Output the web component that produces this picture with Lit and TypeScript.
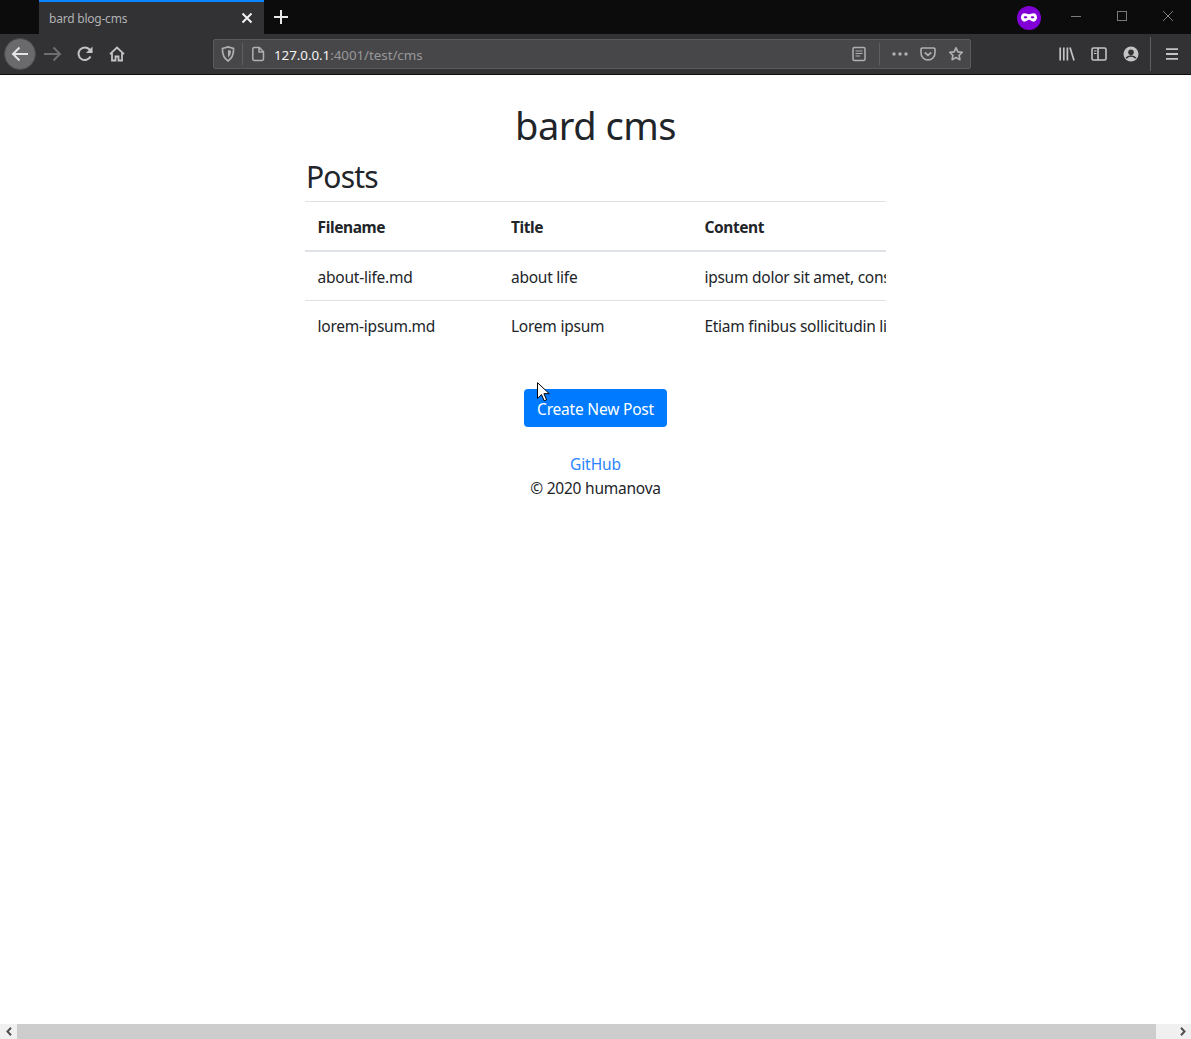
import { LitElement, html, css, svg } from 'lit';
import { customElement } from 'lit/decorators.js';

const posts = [
  { file: 'about-life.md', title: 'about life', content: 'ipsum dolor sit amet, consectetur adipiscing elit' },
  { file: 'lorem-ipsum.md', title: 'Lorem ipsum', content: 'Etiam finibus sollicitudin ligula, vitae tempor' },
];

const icon = (w: number, h: number, body: unknown, cls = '') =>
  html`<svg class=${cls} width=${w} height=${h} viewBox="0 0 ${w} ${h}" fill="none" stroke="currentColor" stroke-width="1.6">${body}</svg>`;

@customElement('app-root')
export class AppRoot extends LitElement {
  static override styles = css`
    :host {
      display: flex;
      flex-direction: column;
      height: 1039px;
      overflow: hidden;
      position: relative;
      background: #fff;
      font-family: 'Noto Sans', 'Open Sans', sans-serif;
      color: #212529;
    }

    svg { display: block; flex-shrink: 0; }

    /* tab strip */
    .tabs {
      height: 34px;
      display: flex;
      background: #0c0c0d;
      padding-left: 39px;
      flex-shrink: 0;
    }
    .tab {
      width: 225px;
      box-sizing: border-box;
      height: 34px;
      background: #323234;
      border-top: 2px solid #0a84ff;
      display: flex;
      align-items: center;
      padding: 0 11px 0 10px;
      color: #b1b1b3;
      font-size: 12px;
      letter-spacing: -0.22px;
    }
    .tab .name { flex: 1; padding-top: 1px; }
    .tab-close { color: #f1f1f1; }
    .new-tab { margin: 10px 0 0 10px; color: #e8e8e8; }
    .win {
      margin-left: auto;
      display: flex;
      align-items: center;
      height: 34px;
      padding-bottom: 2px;
      box-sizing: border-box;
      color: #7c7c7d;
    }
    .mask {
      width: 24px;
      height: 24px;
      border-radius: 50%;
      background: #8000d7;
      display: flex;
      align-items: center;
      justify-content: center;
      margin-right: 30px;
      margin-top: 3px;
    }
    .win .min { margin-right: 36px; }
    .win .max { margin-right: 36px; }
    .win .close { margin-right: 18px; }

    /* nav toolbar */
    .toolbar {
      height: 40px;
      background: #323234;
      border-bottom: 1px solid #0c0c0d;
      display: flex;
      align-items: center;
      flex-shrink: 0;
      color: #c4c4c5;
    }
    .back {
      width: 32px;
      height: 32px;
      margin: 0 0 0 4px;
      border-radius: 50%;
      background: #6a6a6c;
      border: 1px solid #4a4a4c;
      box-sizing: border-box;
      display: flex;
      align-items: center;
      justify-content: center;
      color: #e4e4e4;
    }
    .forward { margin-left: 8px; color: #6e6e70; }
    .reload { margin-left: 15px; }
    .home { margin-left: 16px; }

    .urlbar {
      margin-left: 88px;
      width: 758px;
      height: 30px;
      box-sizing: border-box;
      background: #474749;
      border: 1px solid #5a5a5c;
      border-radius: 2px;
      display: flex;
      align-items: center;
      color: #b0b0b1;
    }
    .shield { margin-left: 7px; }
    .sep { width: 1px; height: 22px; background: #5f5f61; }
    .urlbar .sep.a { margin-left: 7px; }
    .doc { margin-left: 8px; }
    .url {
      margin-left: 9px;
      flex: 1;
      font-size: 13.4px;
      letter-spacing: -0.06px;
      color: #98989a;
      white-space: nowrap;
      padding-top: 2px;
    }
    .url b { font-weight: 400; color: #f2f2f2; }
    .reader { margin-right: 13px; }
    .urlbar .sep.b { margin-right: 12px; }
    .dots { margin-right: 12px; }
    .pocket { margin-right: 12px; }
    .star { margin-right: 6px; }

    .tools {
      display: flex;
      align-items: center;
      margin-left: 88px;
    }
    .library { margin-right: 16px; }
    .sidebar { margin-right: 16px; }
    .account { margin-right: 11px; }
    .tools .sep { height: 34px; margin-right: 15px; }

    /* page */
    main {
      flex: 1;
      min-height: 0;
      display: flex;
      flex-direction: column;
      align-items: center;
    }
    .wrap { width: 581px; }
    h1 {
      margin: 24px 0 2px;
      font-size: 38px;
      font-weight: 400;
      line-height: 52px;
      text-align: center;
      letter-spacing: -0.5px;
    }
    h2 {
      margin: 0 0 0 1px;
      font-size: 30px;
      font-weight: 400;
      line-height: 48px;
      letter-spacing: -0.8px;
    }
    .table-box { overflow: hidden; }
    .row {
      display: grid;
      grid-template-columns: 193.4px 193.4px 1fr;
      font-size: 15.5px;
      line-height: 24px;
      letter-spacing: -0.24px;
      white-space: nowrap;
      border-top: 1px solid #dee2e6;
      padding: 13px 0 12px;
    }
    .row > div { padding-left: 12.6px; }
    .row.head {
      font-weight: 700;
      letter-spacing: -0.4px;
      padding-bottom: 11px;
      border-bottom: 2px solid #dee2e6;
    }
    .row.head + .row { border-top: 0; }
    .row.first { padding-bottom: 11px; }

    .actions { display: flex; justify-content: center; margin-top: 39px; }
    button {
      width: 143px;
      height: 38px;
      background: #007bff;
      border: 0;
      border-radius: 4px;
      color: #fff;
      font: inherit;
      font-size: 15.5px;
      letter-spacing: -0.2px;
      padding: 2px 0 0;
    }
    footer {
      margin-top: 25px;
      text-align: center;
      font-size: 15.5px;
      line-height: 24px;
      letter-spacing: -0.22px;
    }
    footer a { color: #2a85ff; text-decoration: none; display: block; letter-spacing: -0.06px; }

    /* scrollbar */
    .hscroll {
      height: 15px;
      background: #f0f0f0;
      display: flex;
      align-items: center;
      flex-shrink: 0;
      color: #505050;
    }
    .hscroll .arrow { width: 17px; display: flex; justify-content: center; }
    .thumb { width: 1139px; height: 15px; background: #cdcdcd; }
    .hscroll .arrow.right { width: 35px; justify-content: flex-end; padding-right: 5px; box-sizing: border-box; }

    .cursor { position: absolute; left: 537px; top: 382px; }
  `;

  private _tabStrip() {
    return html`
      <div class="tabs">
        <div class="tab">
          <span class="name">bard blog-cms</span>
          ${icon(12, 12, svg`<path d="M1.500 1.500l9 9M10.500 1.500l-9 9" stroke-width="2"/>`, 'tab-close')}
        </div>
        ${icon(14, 14, svg`<path d="M7 0v14M0 7h14" stroke-width="2"/>`, 'new-tab')}
        <div class="win">
          <div class="mask">
            <svg width="16" height="9" viewBox="0 0 16 9">
              <path fill="#fff" fill-rule="evenodd" d="M3.500.3C5.500.3 6.500 1.300 8 1.300S10.500.3 12.500.3C14.700.3 16 2 16 4.300S14.700 8.700 12.500 8.700C10.500 8.700 9.500 6.800 8 6.800S5.500 8.700 3.500 8.700C1.300 8.700 0 6.600 0 4.300S1.300.3 3.500.3ZM4.500 3.200C3.400 3.200 2.700 3.700 2.700 4.300S3.400 5.400 4.500 5.400 6.300 4.900 6.300 4.300 5.600 3.200 4.500 3.200ZM11.500 3.200C10.400 3.200 9.700 3.700 9.700 4.300S10.400 5.400 11.500 5.400 13.300 4.900 13.300 4.300 12.600 3.200 11.500 3.200Z"/>
            </svg>
          </div>
          ${icon(10, 10, svg`<path d="M0 5.500h10" stroke-width="1"/>`, 'min')}
          ${icon(10, 10, svg`<rect x=".5" y=".5" width="9" height="9" stroke-width="1"/>`, 'max')}
          ${icon(10, 10, svg`<path d="M0 0l10 10M10 0L0 10" stroke-width="1"/>`, 'close')}
        </div>
      </div>
    `;
  }

  private _toolbar() {
    return html`
      <div class="toolbar">
        <div class="back">
          ${icon(18, 16, svg`<path d="M17 8H2M8.500 1.500L2 8l6.500 6.500" stroke-width="2"/>`)}
        </div>
        ${icon(18, 16, svg`<path d="M0 8h15M9.500 1.500L16 8l-6.500 6.500" stroke-width="2"/>`, 'forward')}
        ${icon(16, 16, svg`<path d="M13.500 10.500A6.300 6.300 0 1 1 12.500 3.500L15 6" stroke-width="2"/><path d="M15.500 0.500v6.500h-6.500z" fill="currentColor" stroke="none"/>`, 'reload')}
        ${icon(16, 16, svg`<path d="M1 8.200L8 1.500l7 6.700M3 7v7.500h3.500v-4h3v4H13V7" stroke-width="1.800"/>`, 'home')}
        <div class="urlbar">
          ${icon(14, 16, svg`<path d="M1.500 2.500L7 1l5.500 1.500c.3 5-1 9.500-5.500 12.500C2.500 12 1.200 7.500 1.500 2.500z" stroke-width="1.700"/><path d="M7 4l3 .8c0 3-.6 5-3 6.700z" fill="currentColor" stroke="none"/>`, 'shield')}
          <div class="sep a"></div>
          ${icon(14, 16, svg`<path d="M1.800 3a1.500 1.500 0 0 1 1.500-1.500h5L12.500 5.700V13a1.500 1.500 0 0 1-1.500 1.500H3.300A1.500 1.500 0 0 1 1.800 13zM8 1.500V6h4.500" stroke-width="1.500"/>`, 'doc')}
          <div class="url"><b>127.0.0.1</b>:4001/test/cms</div>
          ${icon(14, 16, svg`<rect x="1" y="1.500" width="12" height="13" rx="1.500" stroke-width="1.500"/><path d="M3.500 5h7M3.500 7.500h7M3.500 10h4.500" stroke-width="1.200"/>`, 'reader')}
          <div class="sep b"></div>
          ${icon(16, 4, svg`<circle cx="2" cy="2" r="1.700" fill="currentColor" stroke="none"/><circle cx="8" cy="2" r="1.700" fill="currentColor" stroke="none"/><circle cx="14" cy="2" r="1.700" fill="currentColor" stroke="none"/>`, 'dots')}
          ${icon(16, 14, svg`<path d="M2.200 1h11.600A1.200 1.200 0 0 1 15 2.200V6a7 7 0 0 1-14 0V2.200A1.200 1.200 0 0 1 2.200 1z" stroke-width="1.600"/><path d="M4.800 5.300L8 8.300l3.200-3" stroke-width="1.800"/>`, 'pocket')}
          ${icon(16, 16, svg`<path d="M8 1.800l1.900 4 4.300.6-3.100 3 .8 4.300L8 11.600l-3.900 2.100.8-4.300-3.100-3 4.300-.6z" stroke-width="1.700" stroke-linejoin="round"/>`, 'star')}
        </div>
        <div class="tools">
          ${icon(16, 14, svg`<path d="M1.200 0.500v13M4.800 0.500v13M8.400 0.500v13M11 0.500l4 13" stroke-width="1.700"/>`, 'library')}
          ${icon(16, 14, svg`<rect x="1" y="1" width="14" height="12" rx="1.500" stroke-width="1.600"/><path d="M7 1v12" stroke-width="1.600"/><path d="M3 4h2.500M3 6.500h2.500" stroke-width="1.200"/>`, 'sidebar')}
          ${icon(16, 16, svg`<circle cx="8" cy="8" r="7.500" fill="currentColor" stroke="none"/><circle cx="8" cy="6.300" r="2.800" fill="#323234" stroke="none"/><path d="M3.200 12.300c1.200-1.800 2.900-2.300 4.800-2.300s3.600.5 4.800 2.300" stroke="#323234" stroke-width="1.700"/>`, 'account')}
          <div class="sep"></div>
          ${icon(12, 12, svg`<path d="M0 1.200h12M0 6h12M0 10.800h12" stroke-width="1.800"/>`, 'menu')}
        </div>
      </div>
    `;
  }

  override render() {
    return html`
      ${this._tabStrip()}
      ${this._toolbar()}
      <main>
        <div class="wrap">
          <h1>bard cms</h1>
          <h2>Posts</h2>
          <div class="table-box">
            <div class="row head">
              <div>Filename</div><div>Title</div><div>Content</div>
            </div>
            ${posts.map(
              (p, i) => html`
                <div class="row ${i === 0 ? 'first' : ''}">
                  <div>${p.file}</div><div>${p.title}</div><div>${p.content}</div>
                </div>
              `,
            )}
          </div>
          <div class="actions"><button>Create New Post</button></div>
          <footer>
            <a href="#">GitHub</a>
            <div>© 2020 humanova</div>
          </footer>
        </div>
      </main>
      <div class="hscroll">
        <div class="arrow">${icon(6, 9, svg`<path d="M5 .8L1.500 4.500 5 8.200" stroke-width="2"/>`)}</div>
        <div class="thumb"></div>
        <div class="arrow right">${icon(6, 9, svg`<path d="M1 .8l3.500 3.700L1 8.200" stroke-width="2"/>`)}</div>
      </div>
      <svg class="cursor" width="13" height="20" viewBox="0 0 13 20">
        <path d="M.5.700v15.600l4-3.700 2.700 6.200 2.400-1-2.700-6.100h5.400z" fill="#fff" stroke="#000" stroke-width="1"/>
      </svg>
    `;
  }
}
